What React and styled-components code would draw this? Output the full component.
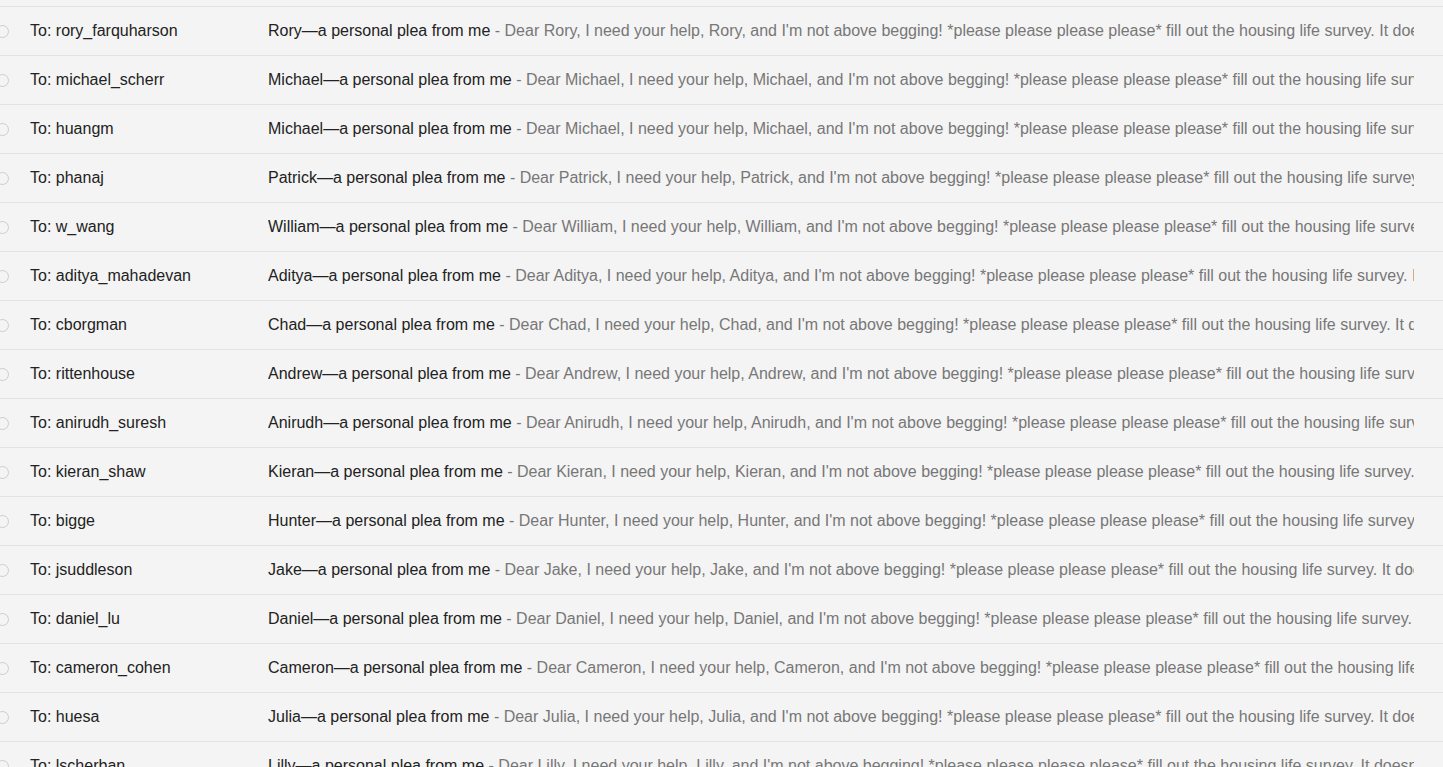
import React from "react";
import styled, { createGlobalStyle } from "styled-components";

const GlobalStyle = createGlobalStyle`
  html, body {
    margin: 0;
    padding: 0;
    background: #f4f4f4;
    font-family: "Liberation Sans", Arial, sans-serif;
    overflow: hidden;
  }
`;

const List = styled.div`
  width: 1443px;
  background: #f4f4f4;
`;

const TopEdge = styled.div`
  height: 6px;
  border-bottom: 1px solid #e3e3e3;
`;

const Row = styled.div`
  display: grid;
  grid-template-columns: 30px 238px 1146px;
  align-items: center;
  height: 48px;
  border-bottom: 1px solid #e3e3e3;
  font-size: 16px;
  color: #222;
`;

const Check = styled.span`
  width: 13px;
  height: 13px;
  margin-left: -4px;
  border: 1px solid #cdcdcd;
  border-radius: 50%;
  box-sizing: border-box;
`;

const Recipient = styled.div`
  white-space: nowrap;
  overflow: hidden;
`;

const Line = styled.div`
  white-space: nowrap;
  overflow: hidden;
`;

const Subject = styled.span`
  color: #222;
`;

const Snippet = styled.span`
  color: #777;
`;

const rows = [
  ["rory_farquharson", "Rory"],
  ["michael_scherr", "Michael"],
  ["huangm", "Michael"],
  ["phanaj", "Patrick"],
  ["w_wang", "William"],
  ["aditya_mahadevan", "Aditya"],
  ["cborgman", "Chad"],
  ["rittenhouse", "Andrew"],
  ["anirudh_suresh", "Anirudh"],
  ["kieran_shaw", "Kieran"],
  ["bigge", "Hunter"],
  ["jsuddleson", "Jake"],
  ["daniel_lu", "Daniel"],
  ["cameron_cohen", "Cameron"],
  ["huesa", "Julia"],
  ["lscherban", "Lilly"],
];

function MailRow({ to, name }) {
  return (
    <Row>
      <Check />
      <Recipient>To: {to}</Recipient>
      <Line>
        <Subject>{name}—a personal plea from me</Subject>
        <Snippet>
          {" "}
          - Dear {name}, I need your help, {name}, and I'm not above begging!
          *please please please please* fill out the housing life survey. It
          doesn't take long, I promise.
        </Snippet>
      </Line>
    </Row>
  );
}

export default function App() {
  return (
    <>
      <GlobalStyle />
      <List>
        <TopEdge />
        {rows.map(([to, name]) => (
          <MailRow key={to} to={to} name={name} />
        ))}
      </List>
    </>
  );
}
